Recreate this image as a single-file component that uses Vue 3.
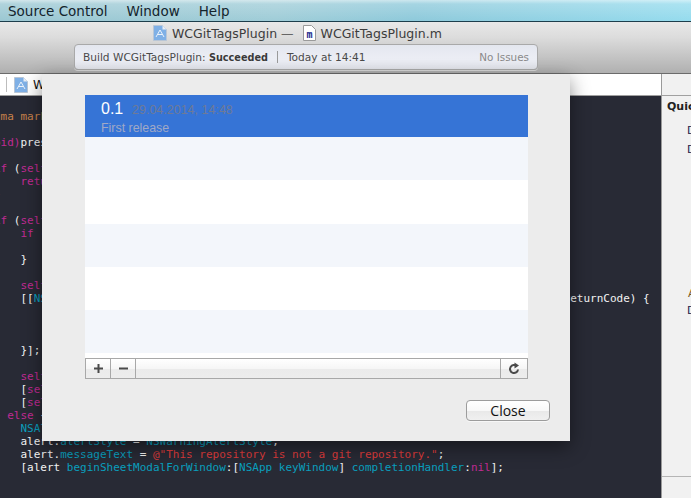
<script setup>
const menus = ['Source Control', 'Window', 'Help']
const plainRows = ['alt', 'plain', 'alt', 'plain', 'alt']
</script>

<template>
  <div class="screen">
    <header class="menubar">
      <span v-for="m in menus" :key="m" class="menu">{{ m }}</span>
    </header>

    <div class="toolbar">
      <div class="title">
        <svg class="doc" viewBox="0 0 14 16" width="14" height="16">
          <path d="M.5.5h9l4 4v11H.5z" fill="#7fb0e6" stroke="#b9c6d6"/>
          <path d="M9.5.5v4h4z" fill="#e8eef6"/>
          <path d="M3 12 7 5l4 7M4.600 9.500h5" fill="none" stroke="#eaf2fb" stroke-width="1"/>
        </svg>
        <span class="name">WCGitTagsPlugin</span>
        <span class="dash">—</span>
        <svg class="doc" viewBox="0 0 13 16" width="13" height="16">
          <path d="M.5.500h8l4 4v11H.5z" fill="#fff" stroke="#9a9a9a"/>
          <text x="6.500" y="13" text-anchor="middle" class="mglyph">m</text>
        </svg>
        <span class="name">WCGitTagsPlugin.m</span>
      </div>
      <div class="status">
        <span class="build">Build WCGitTagsPlugin: <b>Succeeded</b></span>
        <i class="sep"></i>
        <span class="when">Today at 14:41</span>
        <span class="issues">No Issues</span>
      </div>
    </div>

    <div class="workspace">
      <div class="main">
        <div class="tabbar">
          <i class="tabsep"></i>
          <svg class="tabicon" viewBox="0 0 14 16" width="14" height="16">
            <path d="M.5.5h9l4 4v11H.5z" fill="#7fb0e6" stroke="#b9c6d6"/>
            <path d="M9.5.5v4h4z" fill="#e8eef6"/>
            <path d="M3 12 7 5l4 7M4.600 9.500h5" fill="none" stroke="#eaf2fb" stroke-width="1"/>
          </svg>
          <span class="tabname">WCGitTagsPlugin.m</span>
        </div>
        <pre class="code"><span class="prag">#pragma mark - Actions</span>

<span class="kw">- (void)</span>presentSheet {

    <span class="kw">if</span> (<span class="kw">self</span>.window.isVisible) {
        <span class="kw">return</span>;
    }

    <span class="kw">if</span> (<span class="kw">self</span>.repository) {
        <span class="kw">if</span> (<span class="fn">self</span>.window) {

        }

        <span class="kw">self</span>.tags = <span class="kw">nil</span>;
        [[<span class="fn">NSApp</span> <span class="fn">keyWindow</span>] <span class="fn">beginSheet</span>:<span class="kw">self</span>.mainWindow <span class="fn">completionHandler</span>:^(<span class="fn">NSModalResponse</span> returnCode) {



        }];

        <span class="kw">self</span>.selected = <span class="kw">nil</span>;
        [<span class="kw">self</span> reloadTags];
        [<span class="kw">self</span> updateView];
    } <span class="kw">else</span> {
        <span class="fn">NSAlert</span> *alert = [[<span class="fn">NSAlert</span> <span class="fn">alloc</span>] <span class="fn">init</span>];
        alert.<span class="fn">alertStyle</span> = <span class="fn">NSWarningAlertStyle</span>;
        alert.<span class="fn">messageText</span> = <span class="str">@"This repository is not a git repository."</span>;
        [alert <span class="fn">beginSheetModalForWindow</span>:[<span class="fn">NSApp</span> <span class="fn">keyWindow</span>] <span class="fn">completionHandler</span>:<span class="kw">nil</span>];</pre>
      </div>

      <aside class="inspector">
        <div class="insp-tabs"></div>
        <div class="insp-body">
          <div class="quick">Quick Help</div>
          <div class="line l1">Declaration</div>
          <div class="line l2">Description</div>
          <div class="warn">Availability</div>
          <div class="line l3">Declared In</div>
        </div>
        <div class="insp-foot"></div>
      </aside>

      <section class="dialog">
        <div class="list">
          <div class="row selected">
            <div class="headline"><span class="ver">0.1</span><span class="date">29.04.2014, 14:48</span></div>
            <div class="msg">First release</div>
          </div>
          <div v-for="(r, i) in plainRows" :key="i" class="row" :class="r"></div>
          <div class="list-end"></div>
        </div>
        <div class="list-tools">
          <button class="tool">
            <svg viewBox="0 0 11 11" width="11" height="11"><path d="M5.500 1v9M1 5.500h9" stroke="#4a4a4a" stroke-width="2" fill="none"/></svg>
          </button>
          <button class="tool">
            <svg viewBox="0 0 11 11" width="11" height="11"><path d="M1 5.500h9" stroke="#4a4a4a" stroke-width="2" fill="none"/></svg>
          </button>
          <div class="tool-fill"></div>
          <button class="tool refresh">
            <svg viewBox="0 0 12 13" width="12" height="13"><path d="M8.800 4.200A4 4 0 1 0 10 7.500" stroke="#4a4a4a" stroke-width="2" fill="none"/><path d="M6.500.5v6l4.500-3z" fill="#4a4a4a"/></svg>
          </button>
        </div>
        <div class="actions">
          <button class="close">Close</button>
        </div>
      </section>
    </div>
  </div>
</template>

<style>
html, body { margin: 0; background: #282a35; }
</style>

<style scoped>
.screen {
  width: 691px;
  height: 498px;
  display: flex;
  flex-direction: column;
  overflow: hidden;
  font-family: "DejaVu Sans", sans-serif;
}
.menubar {
  height: 21px;
  flex: none;
  display: flex;
  gap: 19px;
  padding-left: 8px;
  align-items: center;
  border-bottom: 1px solid #1d3e4c;
  background:
    linear-gradient(180deg, rgba(255,255,255,.55) 0, rgba(255,255,255,.2) 4px, rgba(255,255,255,0) 20px),
    linear-gradient(90deg, #9cc8d3 0, #a0cdd8 40%, #8fcadb 60%, #96dcee 100%);
}
.menu { font-size: 13.500px; color: #14242c; line-height: 21px; padding-top: 1px; }
.toolbar {
  height: 52px;
  flex: none;
  box-sizing: border-box;
  border-bottom: 1px solid #6b6b6b;
  background: linear-gradient(180deg, #e8e8e8 0, #dcdcdc 30%, #b0b0b0 100%);
  padding-left: 74px;
}
.title {
  height: 22px;
  padding-left: 79px;
  display: flex;
  align-items: center;
  color: #3c3c3c;
  font-size: 12.500px;
}
.doc { flex: none; }
.name { margin-left: 5px; }
.dash { margin-left: 4px; margin-right: 9px; color: #666; }
.mglyph { font: bold 10px "DejaVu Sans Mono", monospace; fill: #1a2a8c; }
.status {
  width: 464px;
  height: 26px;
  box-sizing: border-box;
  border: 1px solid #a9a9a9;
  border-radius: 4px;
  background: linear-gradient(180deg, #e4e7ef, #eceef5 60%, #e3e5ec);
  box-shadow: 0 1px 0 rgba(255,255,255,.5);
  display: flex;
  align-items: center;
  padding: 0 8px;
  font-size: 10.600px;
  color: #4a4a4a;
}
.build b { color: #3a3a3a; font-size: 9.700px; }
.sep { width: 1px; height: 12px; background: #9a9a9a; margin: 0 9px; }
.issues { margin-left: auto; color: #8a8a8a; font-size: 10.400px; }
.workspace {
  position: relative;
  flex: 1;
  display: flex;
  min-height: 0;
}
.main {
  width: 661px;
  flex: none;
  display: flex;
  flex-direction: column;
  min-width: 0;
  overflow: hidden;
  background: #282a35;
}
.tabbar {
  height: 22px;
  flex: none;
  box-sizing: border-box;
  background: #fff;
  border-bottom: 1px solid #a0a0a0;
  display: flex;
  align-items: center;
  padding-left: 6px;
}
.tabsep { width: 1px; height: 15px; background: #bdbdbd; }
.tabicon { margin-left: 7px; }
.tabname { margin-left: 5px; font-size: 12px; color: #111; }
.code {
  flex: 1;
  margin: 0 0 0 -32.500px;
  color: #f2f2f2;
  font: 11px/13px "DejaVu Sans Mono", monospace;
  padding: 14px 0 0 0;
  overflow: hidden;
  white-space: pre;
}
.kw { color: #c02a93; }
.fn { color: #0a9fbe; }
.str { color: #dc3b3b; }
.prag { color: #c9824b; }
.inspector {
  flex: 1;
  display: flex;
  flex-direction: column;
  border-left: 1px solid #9a9a9a;
  background: #f1f1f1;
  min-width: 0;
  overflow: hidden;
}
.insp-tabs { height: 22px; flex: none; box-sizing: border-box; border-bottom: 1px solid #a0a0a0; }
.insp-body {
  flex: 1;
  font-size: 11px;
  color: #222;
  padding: 4px 0 0 5px;
  white-space: nowrap;
}
.quick { font-weight: 700; line-height: 14px; }
.line { padding-left: 20px; line-height: 14px; color: #23234a; }
.l1 { margin-top: 10px; }
.l2 { margin-top: 5px; }
.warn { margin-top: 130px; padding-left: 21px; color: #7a5a20; line-height: 14px; }
.l3 { margin-top: 3px; }
.insp-foot { height: 21px; flex: none; border-top: 1px solid #b5b5b5; }
.dialog {
  position: absolute;
  left: 42px;
  top: 0;
  width: 528px;
  height: 367px;
  box-sizing: border-box;
  padding: 21px 42px 0 43px;
  background: #ececec;
  box-shadow: 0 6px 18px rgba(0,0,0,.45);
  display: flex;
  flex-direction: column;
  font-family: "Liberation Sans", sans-serif;
}
.list { background: #fff; flex: none; }
.row { height: 43.250px; box-sizing: border-box; }
.alt { background: #f3f6fb; }
.plain { background: #fff; }
.selected {
  height: 42px;
  background: #3674d6;
  padding: 4px 0 0 16px;
}
.headline { display: flex; align-items: baseline; line-height: 20px; }
.ver { color: #fff; font-size: 16px; width: 31px; }
.date { color: #6e7a96; font-size: 12.500px; }
.msg { color: #a0a9c6; font-size: 12.400px; line-height: 16px; }
.list-end { height: 5px; }
.list-tools {
  height: 21px;
  flex: none;
  box-sizing: border-box;
  display: flex;
  border: 1px solid #a8a8a8;
  background: linear-gradient(180deg, #fff 0, #f6f6f6 50%, #ebebeb 55%, #ededed 100%);
}
.tool {
  width: 25px;
  flex: none;
  padding: 0;
  border: 0;
  border-right: 1px solid #a8a8a8;
  background: transparent;
  display: flex;
  align-items: center;
  justify-content: center;
}
.tool-fill { flex: 1; }
.refresh { width: 27px; border-right: 0; border-left: 1px solid #a8a8a8; }
.actions {
  display: flex;
  justify-content: flex-end;
  margin-top: 21px;
  margin-right: -22px;
}
.close {
  width: 84px;
  height: 21px;
  box-sizing: border-box;
  padding: 0 0 1px;
  border: 1px solid #9c9c9c;
  border-radius: 4px;
  background: linear-gradient(180deg, #fff 0, #f8f8f8 50%, #e9e9e9 55%, #f0f0f0 100%);
  box-shadow: 0 1px 0 rgba(255,255,255,.6);
  font: 14px "Open Sans", "Liberation Sans", sans-serif;
  color: #111;
}
</style>
